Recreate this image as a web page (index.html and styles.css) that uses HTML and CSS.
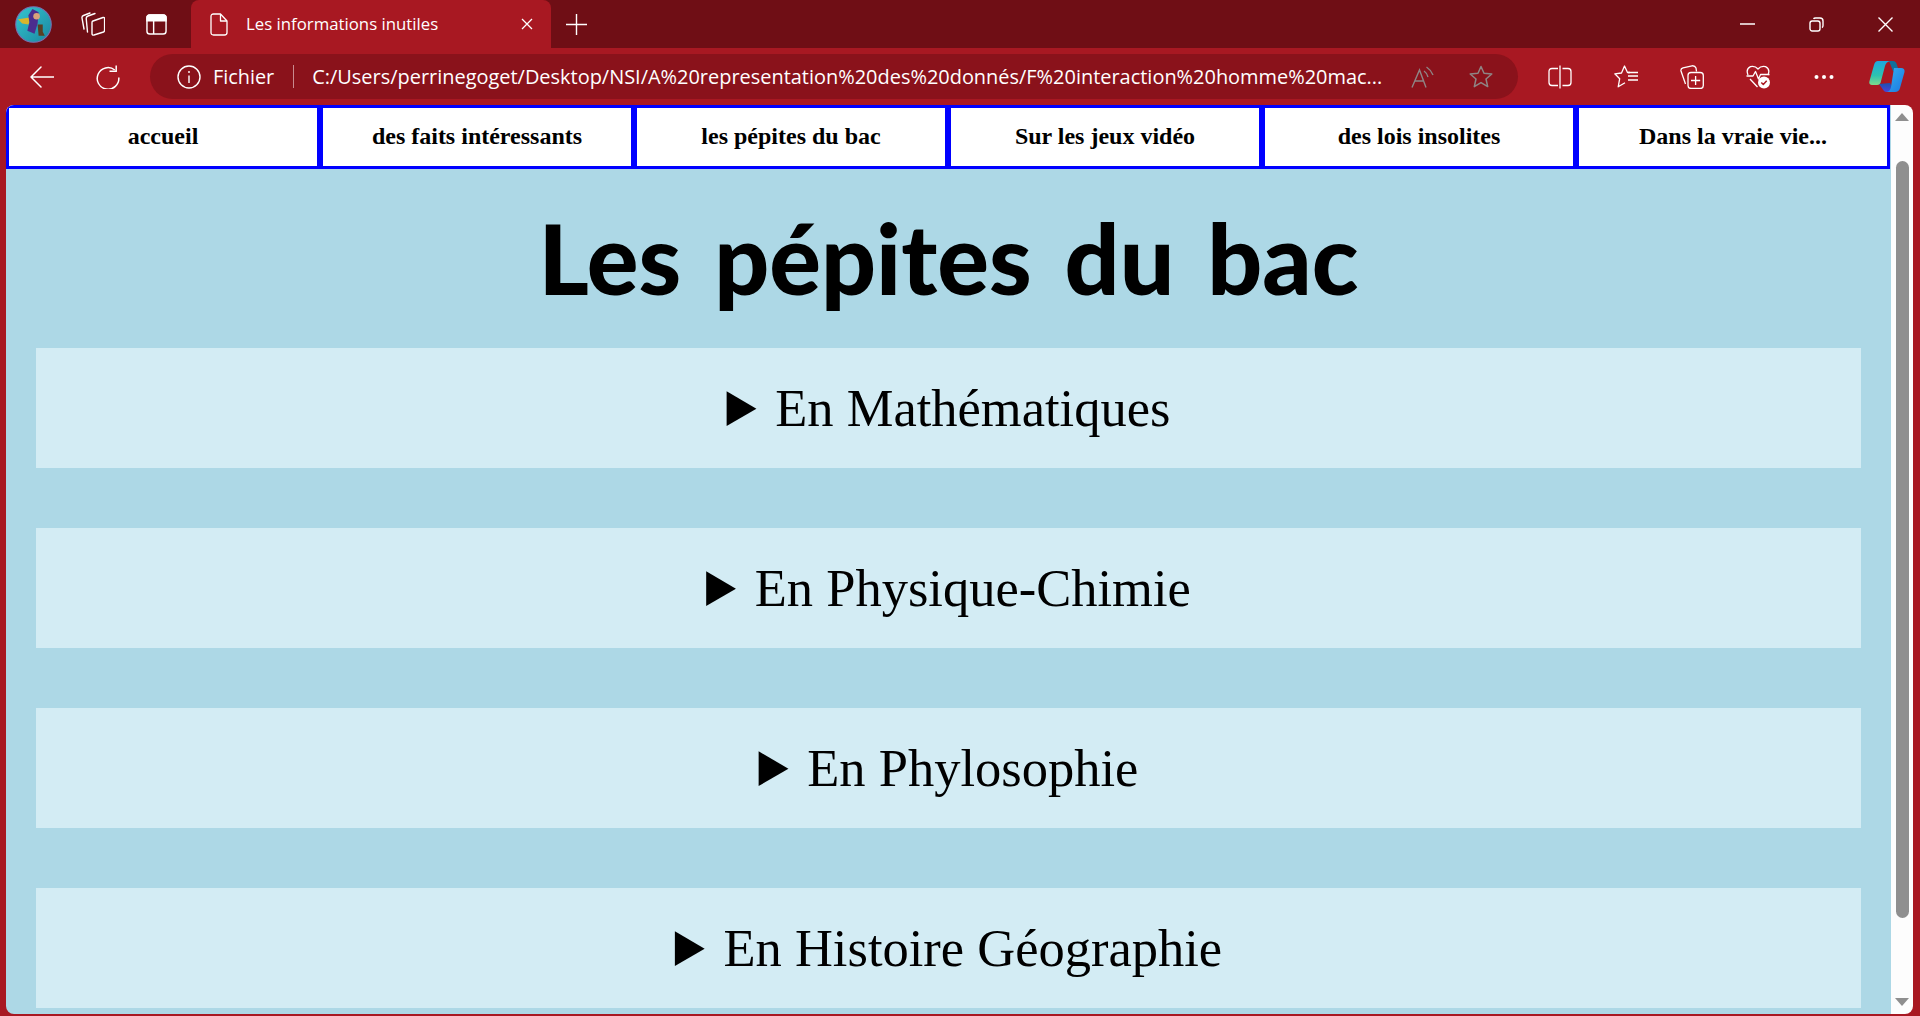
FILE: index.html
```html
<!DOCTYPE html>
<html lang="fr">
<head>
  <meta charset="UTF-8" />
  <title>Les informations inutiles</title>
  <link rel="stylesheet" href="styles.css">
</head>
<body>
  <!-- barre d'onglets -->
  <div class="titlebar">
    <div class="tb-left">
      <svg class="avatar" width="37" height="37" viewBox="0 0 36 36">
        <defs>
          <linearGradient id="avbg" x1="0" y1="0" x2="1" y2="1"><stop offset="0" stop-color="#35c6cf"/><stop offset="1" stop-color="#1a86a0"/></linearGradient>
        </defs>
        <circle cx="18" cy="18" r="17.3" fill="url(#avbg)" stroke="#7a6fb0"/>
        <path d="M3 13 L16 11 L13 18 L7 17 Z" fill="#d9b52c"/>
        <path d="M13 9 L17 3 L23 6 L22 17 L19 27 L12 24 L14 16 Z" fill="#4b2d8f"/>
        <circle cx="21" cy="10" r="3.2" fill="#d9a27a"/>
        <path d="M22 18 h5 v7 l2 4 h-6 z" fill="#5a3f24"/>
      </svg>
      <svg class="ico tabs-ico" width="24" height="24" viewBox="0 0 24 24" fill="none" stroke="#fff" stroke-width="1.4" stroke-linejoin="round" stroke-linecap="round">
        <path d="M9 1 L2.5 3.5 Q0.7 4.2 1 6 L3 17"/>
        <path d="M14 1.5 L7 4 Q5 4.7 5.2 6.5 L6.5 20"/>
        <path d="M12 9 L22 5.5 Q23.6 5 23.6 7 V18 Q23.6 19.5 22.5 20 L13 23 Q11 23.5 11 21.5 V10.5 Q11 9.4 12 9 Z"/>
      </svg>
      <svg class="ico layout-ico" width="21" height="21" viewBox="0 0 22 22" fill="none" stroke="#fff" stroke-width="1.5">
        <rect x="1" y="1" width="20" height="20" rx="3"/>
        <path d="M1 7 H21 V4 Q21 1 18 1 H4 Q1 1 1 4 Z" fill="#fff"/>
        <path d="M8 7 V21"/>
      </svg>
    </div>
    <div class="tab">
      <svg width="18" height="23" viewBox="0 0 18 23" fill="none" stroke="#fff" stroke-width="1.3" stroke-linejoin="round">
        <path d="M3.5 1 H10.5 L17 8 V19.5 Q17 22 14.5 22 H3.5 Q1 22 1 19.5 V3.5 Q1 1 3.5 1 Z"/>
        <path d="M10.5 1 V8 H17"/>
      </svg>
      <span class="tab-title">Les informations inutiles</span>
      <svg class="tab-close" width="12" height="12" viewBox="0 0 12 12" stroke="#fff" stroke-width="1.3"><path d="M1 1 L11 11 M11 1 L1 11"/></svg>
    </div>
    <svg class="newtab" width="21" height="21" viewBox="0 0 21 21" stroke="#fff" stroke-width="1.4"><path d="M10.5 0 V21 M0 10.5 H21"/></svg>
    <div class="winctl">
      <svg width="15" height="14" viewBox="0 0 15 14" stroke="#fff" stroke-width="1.5"><path d="M0 7 H15"/></svg>
      <svg width="15" height="15" viewBox="0 0 15 15" fill="none" stroke="#fff" stroke-width="1.4"><rect x="1" y="4" width="10" height="10" rx="2.2"/><path d="M4.5 1.8 Q5 1 6.5 1 H11 Q14 1 14 4 V8.5 Q14 10 13 10.6"/></svg>
      <svg width="15" height="15" viewBox="0 0 15 15" stroke="#fff" stroke-width="1.4"><path d="M0.5 0.5 L14.5 14.5 M14.5 0.5 L0.5 14.5"/></svg>
    </div>
  </div>

  <!-- barre d'adresse -->
  <div class="toolbar">
    <svg class="tool-back" width="24" height="22" viewBox="0 0 24 22" fill="none" stroke="#fff" stroke-width="1.5" stroke-linecap="round"><path d="M11 1 L1 11 L11 21 M1 11 H24"/></svg>
    <svg class="tool-reload" width="24" height="24" viewBox="0 0 24 24" fill="none" stroke="#fff" stroke-width="1.5"><path d="M18.8 5 A10.8 10.8 0 1 0 22.8 12.5"/><path d="M13.5 6.2 H20.2 V0.5"/></svg>
    <div class="addressbar">
      <svg width="24" height="24" viewBox="0 0 24 24" fill="none" stroke="#fff" stroke-width="1.4"><circle cx="12" cy="12" r="11"/><path d="M12 10.5 V18 M12 6 V8"/></svg>
      <span class="scheme">Fichier</span>
      <span class="sep"></span>
      <span class="url">C:/Users/perrinegoget/Desktop/NSI/A%20representation%20des%20donnés/F%20interaction%20homme%20mac...</span>
      <svg class="dim" width="24" height="22" viewBox="0 0 24 22" fill="none" stroke="#8f8585" stroke-width="1.4"><path d="M1 21.5 L8.5 4 L15 21.5 M3.5 15 H13"/><path d="M13 5 Q16 7 17 11 M15.5 1 Q20 4 22 9"/></svg>
      <svg class="dim star" width="24" height="23" viewBox="0 0 24 23" fill="none" stroke="#8f8585" stroke-width="1.5" stroke-linejoin="round"><path d="M12 1.5 L15 8.3 L22.8 9 L17 14 L18.7 21.6 L12 17.6 L5.3 21.6 L7 14 L1.2 9 L9 8.3 Z"/></svg>
    </div>
    <div class="tools">
      <svg width="24" height="24" viewBox="0 0 24 24" fill="none" stroke="#fff" stroke-width="1.3"><path d="M10 3.5 H4 Q1 3.5 1 6.5 V17.5 Q1 20.5 4 20.5 H10 M14.5 3.5 H20 Q23 3.5 23 6.5 V17.5 Q23 20.5 20 20.5 H14.5 M12 0.5 V23.5"/></svg>
      <svg width="24" height="23" viewBox="0 0 24 23" fill="none" stroke="#fff" stroke-width="1.3" stroke-linejoin="round"><path d="M16 7.5 L13.5 7.5 L10.5 1 L7.5 8 L0.8 8.8 L5.7 13.7 L4.2 21.8 L11 17.8"/><path d="M14 11 H24 M14 15 H24 M14 7.5 H24"/></svg>
      <svg width="24" height="24" viewBox="0 0 24 24" fill="none" stroke="#fff" stroke-width="1.3" stroke-linejoin="round"><path d="M5.5 19 L1 6 Q0.5 3.5 3 2.8 L12 0.8 Q15 0.5 16 3 L16.5 6.5"/><rect x="8" y="7.5" width="15.3" height="16" rx="3"/><path d="M15.6 11 V20 M11 15.5 H20.2"/></svg>
      <svg width="24" height="24" viewBox="0 0 24 24" fill="none" stroke="#fff" stroke-width="1.3" stroke-linejoin="round"><path d="M2 10 Q-0.5 4 4.5 1.6 Q9 0.5 12 4 Q15 0.5 19.5 1.6 Q24.5 4 22 10"/><path d="M0.5 11 H7 L9.5 6.5 L12.5 14 L14.5 9.5 H23.5 M4 14 L11.5 22"/><circle cx="18" cy="17.5" r="6" fill="#fff" stroke="none"/><path d="M15.3 17.5 L17.3 19.5 L20.7 15.7" stroke="#a81822" stroke-width="1.5"/></svg>
      <svg class="more" width="20" height="6" viewBox="0 0 20 6" fill="#fff"><circle cx="2.5" cy="3" r="2"/><circle cx="10" cy="3" r="2"/><circle cx="17.5" cy="3" r="2"/></svg>
      <svg class="copilot" width="36" height="33" viewBox="0 0 36 33">
        <defs>
          <linearGradient id="cpa" x1="0" y1="0" x2="0" y2="1"><stop offset="0" stop-color="#1fa8e0"/><stop offset="0.6" stop-color="#2cc3b0"/><stop offset="1" stop-color="#7fd98a"/></linearGradient>
          <linearGradient id="cpb" x1="0" y1="0" x2="1" y2="1"><stop offset="0" stop-color="#35b0f0"/><stop offset="1" stop-color="#1c78e0"/></linearGradient>
          <linearGradient id="cpc" x1="0" y1="0" x2="0" y2="1"><stop offset="0" stop-color="#1a50b0"/><stop offset="1" stop-color="#4a44d8"/></linearGradient>
        </defs>
        <path d="M20 1 H24 Q27 1 28 5 L30 11 H24 Z" fill="#0f6f9c"/>
        <path d="M9 1 H21 Q17 2 16 6 L11.5 23 Q11 25 8 25 H3 Q-0.5 25 0.5 21 L5 5 Q6 1 9 1 Z" fill="url(#cpa)"/>
        <path d="M10 24 L15 31 Q16 32 18 32 H26 L21 23 Z" fill="url(#cpc)"/>
        <path d="M25 8 H32 Q36 8 35.5 12 L31 28 Q30 32 26 32 H17 Q21 32 22 27 L24.5 11 Z" fill="url(#cpb)"/>
      </svg>
    </div>
  </div>

  <!-- page affichée -->
  <div class="viewport">
    <div class="page">
      <nav class="menu">
        <a href="#">accueil</a>
        <a href="#">des faits intéressants</a>
        <a href="#">les pépites du bac</a>
        <a href="#">Sur les jeux vidéo</a>
        <a href="#">des lois insolites</a>
        <a href="#">Dans la vraie vie...</a>
      </nav>
      <h1>Les pépites du bac</h1>
      <details><summary><span>En Mathématiques</span></summary></details>
      <details><summary><span>En Physique-Chimie</span></summary></details>
      <details><summary><span>En Phylosophie</span></summary></details>
      <details><summary><span>En Histoire Géographie</span></summary></details>
    </div>
    <div class="scrollbar">
      <span class="arrow-up"></span>
      <span class="thumb"></span>
      <span class="arrow-down"></span>
    </div>
  </div>
</body>
</html>
```

FILE: styles.css
```css
html, body {
  height: 100%;
}

body {
  margin: 0;
  background-color: #a81822;
  font-family: "Liberation Serif", serif;
  overflow: hidden;
  display: flex;
  flex-direction: column;
}

svg {
  display: block;
  flex: none;
}

/* barre d'onglets */
.titlebar {
  height: 48px;
  background-color: #6f0e15;
  display: flex;
  align-items: center;
  flex: none;
}

.tb-left {
  width: 191px;
  display: flex;
  align-items: center;
  flex: none;
}

.avatar {
  margin-left: 15px;
}

.tabs-ico {
  margin-left: 29px;
}

.layout-ico {
  margin-left: 41px;
}

.tab {
  width: 360px;
  height: 48px;
  box-sizing: border-box;
  background-color: #a81822;
  border-radius: 8px 8px 0 0;
  display: flex;
  align-items: center;
  padding: 0 18px 0 19px;
  color: #fff;
  font-family: "Open Sans", sans-serif;
  font-size: 16.8px;
}

.tab-title {
  margin-left: 18px;
  padding-bottom: 2px;
  flex: 1;
}

.newtab {
  margin-left: 15px;
}

.winctl {
  margin-left: auto;
  width: 240px;
  display: flex;
  align-items: center;
  justify-content: space-between;
  padding-right: 27px;
  box-sizing: border-box;
  padding-left: 60px;
}

/* barre d'adresse */
.toolbar {
  height: 57px;
  flex: none;
  display: flex;
  align-items: center;
}

.tool-back {
  margin-left: 30px;
}

.tool-reload {
  margin-left: 42px;
}

.addressbar {
  margin-left: 30px;
  width: 1368px;
  height: 45px;
  box-sizing: border-box;
  background-color: #8a121b;
  border-radius: 23px;
  display: flex;
  align-items: center;
  padding-left: 27px;
  color: #fff;
  font-family: "Open Sans", sans-serif;
  font-size: 19.85px;
  flex: none;
}

.scheme {
  margin-left: 12px;
}

.sep {
  width: 1px;
  height: 23px;
  background-color: #c98a8f;
  margin: 0 18px 0 19px;
}

.url {
  width: 1076px;
  font-size: 19.95px;
  white-space: nowrap;
  overflow: hidden;
  flex: none;
}

.dim {
  margin-left: 23px;
}

.dim.star {
  margin-left: 34px;
}

.tools {
  margin-left: 30px;
  display: flex;
  align-items: center;
  gap: 42px;
}

.more {
  margin-left: 2px;
}

.copilot {
  margin-left: -7px;
}

/* page */
.viewport {
  flex: 1;
  min-height: 0;
  margin: 0 7px 2px 6px;
  display: flex;
  border-radius: 8px;
  overflow: hidden;
}

.page {
  flex: 1;
  background-color: lightblue;
  overflow: hidden;
}

.menu {
  display: flex;
  height: 64px;
  margin-right: 1px;
}

.menu a {
  flex: 1;
  box-sizing: border-box;
  border: 3px solid blue;
  padding-bottom: 2px;
  background-color: #fff;
  color: #000;
  font-size: 24px;
  font-weight: bold;
  text-decoration: none;
  display: flex;
  align-items: center;
  justify-content: center;
}

h1 {
  font-family: "Comic Sans MS", Lato, sans-serif;
  font-size: 96.5px;
  font-weight: 900;
  text-align: center;
  margin: 0;
  height: 179px;
  line-height: 179px;
  word-spacing: 10px;
}

details {
  margin: 0 30px 60px;
  background-color: #d3ecf4;
}

summary {
  height: 120px;
  line-height: 120px;
  text-align: center;
  font-size: 52.5px;
}

summary span {
  margin-left: -7px;
}

.scrollbar {
  width: 22px;
  flex: none;
  background-color: #fdfdfd;
  display: flex;
  flex-direction: column;
  align-items: center;
  padding: 8px 0;
  box-sizing: border-box;
}

.arrow-up {
  border: 7.5px solid transparent;
  border-top: 0;
  border-bottom: 8px solid #8f8f8f;
}

.thumb {
  width: 13px;
  height: 757px;
  margin-top: 40px;
  background-color: #8f8f8f;
  border-radius: 7px;
}

.arrow-down {
  margin-top: auto;
  border: 7.5px solid transparent;
  border-bottom: 0;
  border-top: 8px solid #8f8f8f;
}
```
